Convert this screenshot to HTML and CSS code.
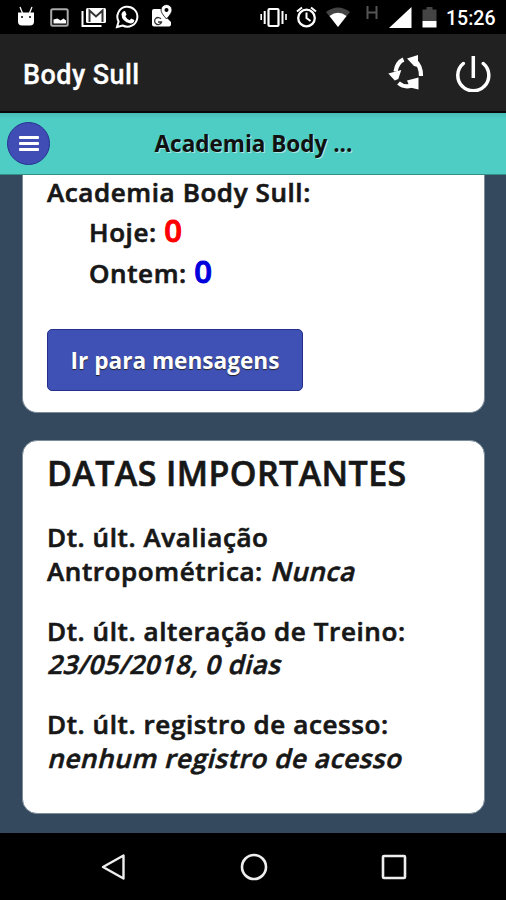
FILE: index.html
```html
<!DOCTYPE html>
<html lang="pt-BR">
<head>
<meta charset="utf-8">
<title>Body Sull</title>
<link rel="stylesheet" href="styles.css">
</head>
<body>
<div class="phone">
  <div class="status">
    <svg class="notifications" width="180" height="34" viewBox="0 0 180 34" fill="none" stroke="#fff">
      <path d="M18 12.500h16v9q0 4-4 4h-8q-4 0-4-4z" fill="#fff" stroke="none"/>
      <path d="M20 7l2.500 6M32 7l-2.500 6" stroke-width="1.300"/>
      <circle cx="22" cy="17" r="1" fill="#000" stroke="none"/><circle cx="30" cy="17" r="1" fill="#000" stroke="none"/>
      <rect x="51.200" y="9.200" width="16.500" height="16.500" rx="1.500" stroke="#aaa" stroke-width="2"/>
      <path d="M53.500 23.500v-4l4-1 3 2 3-2 2.500 2v3z" fill="#fff" stroke="none"/>
      <path d="M82.500 11v15h19" stroke-width="2"/>
      <rect x="86" y="8" width="20" height="15" rx="1.500" fill="#fff" stroke="none"/>
      <path d="M89.500 22V10.500l6.500 6 6.500-6V22" stroke="#333" stroke-width="2"/>
      <path d="M117 27l1.600-5.500a10 10 0 1 1 4 4z" stroke-width="2"/>
      <path d="M123 11.500l2-.5 1.600 3.600-1.300 1.600q1.600 3 4.400 4l1.600-1.600 3 1.500q0 3.400-3.800 3.400-9-2-9-9.200 0-1.400 1.500-2.800z" fill="#fff" stroke="none"/>
      <path d="M154 9h10q-1 4 2 8l5 5v2.500q0 2-2 2h-15q-2 0-2-2V11q0-2 2-2z" fill="#fff" stroke="none"/>
      <path d="M161 19a3.500 3.500 0 1 0 .5 3h-3.500" stroke="#333" stroke-width="1.300"/>
      <path d="M166.500 19q-5.500-6-5.500-9a5.500 5.500 0 0 1 11 0q0 3-5.500 9z" fill="#fff" stroke="#000" stroke-width=".8"/>
      <circle cx="166.500" cy="10" r="2" fill="#000" stroke="none"/>
    </svg>
    <svg class="system" width="190" height="34" viewBox="250 0 190 34" fill="none" stroke="#fff">
      <rect x="268.500" y="9" width="10" height="17" rx="1" stroke-width="2.200"/>
      <path d="M264.700 11v13M282.500 11v13" stroke-width="2"/><path d="M261.200 14v6M286 14v6" stroke-width="1.600"/>
      <circle cx="306.500" cy="18" r="8.300" stroke-width="2.300"/>
      <path d="M306.500 12.500V18l4 3M297 11.500l5-4M311 7.500l5 4" stroke-width="2"/>
      <path d="M326 12q12-9 24 0l-12 15z" fill="#444" stroke="none"/>
      <path d="M329.500 16q8.500-6.500 17 0L338 27z" fill="#fff" stroke="none"/>
      <path d="M367.500 6v13M376.500 6v13M367.500 12.500h9" stroke="#555" stroke-width="2"/>
      <path d="M389 28l22.500-21v21z" fill="#fff" stroke="none"/>
      <path d="M422.500 9.500h4V7h6v2.500h4V21h-14z" fill="#444" stroke="none"/>
      <path d="M422.500 21h14v6.500h-14z" fill="#fff" stroke="none"/>
    </svg>
    <span class="clock">15:26</span>
  </div>

  <header class="appbar">
    <h1 class="app-title">Body Sull</h1>
    <svg class="refresh" width="36" height="36" viewBox="388 56 36 36" fill="none" stroke="#fff">
      <path d="M403.500 60.500q-6.500 3-8 12M414.500 61.500q6.500 5 6.500 15.500M398.500 84q6 5 13 2.500" stroke-width="4.200"/>
      <path d="M388.300 74.500l13-3.500-3 9-3.500 1.500zM407 59.500l11-3.500v12l-4-1zM407 81.500l11.500-3v12l-8.500-2z" fill="#fff" stroke="none"/>
    </svg>
    <svg class="power" width="36" height="38" viewBox="455 54 36 38" fill="none" stroke="#fff" stroke-width="3.500">
      <path d="M463.300 63.500a15.500 15.500 0 1 0 20 0" stroke-linecap="round"/>
      <path d="M473.300 56v22"/>
    </svg>
  </header>

  <div class="pagebar">
    <button class="menu" aria-label="Menu"><span></span><span></span><span></span></button>
    <h2 class="page-title">Academia Body ...</h2>
  </div>

  <main class="content">
    <section class="card messages">
      <p class="line gym">Academia Body Sull:</p>
      <p class="line count">Hoje: <b class="today">0</b></p>
      <p class="line count">Ontem: <b class="yesterday">0</b></p>
      <button class="go">Ir para mensagens</button>
    </section>
    <section class="card dates">
      <h3 class="heading">DATAS IMPORTANTES</h3>
      <p class="entry">Dt. últ. Avaliação<br>Antropométrica: <em>Nunca</em></p>
      <p class="entry">Dt. últ. alteração de Treino:<br><em class="date">23/05/2018, 0 dias</em></p>
      <p class="entry">Dt. últ. registro de acesso:<br><em>nenhum registro de acesso</em></p>
    </section>
  </main>

  <nav class="navbar">
    <svg width="28" height="30" viewBox="0 0 28 30" fill="none" stroke="#eee" stroke-width="2.400" stroke-linejoin="round"><path d="M23.500 3.500v23L3 15z"/></svg>
    <svg width="28" height="30" viewBox="0 0 28 30" fill="none" stroke="#eee" stroke-width="2.600"><circle cx="14" cy="15" r="12"/></svg>
    <svg width="28" height="30" viewBox="0 0 28 30" fill="none" stroke="#eee" stroke-width="2.600"><rect x="3" y="4" width="22" height="22" rx="1"/></svg>
  </nav>
</div>
</body>
</html>
```
FILE: styles.css
```css
* { box-sizing: border-box; margin: 0; padding: 0; }
body { background: #000; }
.phone {
  width: 506px; height: 900px; overflow: hidden;
  display: flex; flex-direction: column;
  font-family: "Open Sans", "Noto Sans", sans-serif;
  font-weight: 600; color: #171717; background: #34495e;
}
.status { height: 34px; flex: none; display: flex; background: #000; color: #fff; }
.status svg, .appbar svg { flex: none; display: block; }
.system { margin-left: 70px; }
.clock {
  margin-left: 6px; line-height: 37px; white-space: nowrap;
  font-family: Roboto, sans-serif; font-size: 19.500px; font-weight: 500;
}
.appbar {
  height: 79px; flex: none; display: flex; align-items: center;
  padding: 0 15px 0 23px; background: #212121; border-bottom: 2px solid #080808;
}
.app-title {
  flex: 1; color: #fff; font-family: Roboto, sans-serif;
  font-size: 27px; font-weight: 500; line-height: 36px; padding-top: 5px;
  letter-spacing: .45px; -webkit-text-stroke: .3px;
}
.refresh { margin-right: 31px; }
.pagebar {
  height: 62px; flex: none; display: flex; align-items: center;
  padding-left: 7px; background: linear-gradient(#48bcb3, #4ecdc4 6px);
  border-bottom: 1px solid #348f88;
}
.menu {
  width: 43px; height: 43px; border: 1px solid #263290; border-radius: 50%;
  background: #3f4db5; display: flex; flex-direction: column; flex: none;
  align-items: center; justify-content: center; gap: 3px;
}
.menu span { width: 20px; height: 3px; background: #fff; border-radius: 1px; }
.page-title {
  flex: 1; padding-right: 49px; text-align: center; font-size: 22.500px; font-weight: 700;
  color: #111; text-shadow: 1px 1px 0 rgba(255, 255, 255, .55);
}
.content { flex: 1; padding: 0 21px 0 22px; min-height: 0; }
.card { background: #fff; border: 1px solid #7c8c99; padding: 0 24px; }
.messages { height: 238px; border-top: 0; border-radius: 0 0 15px 15px; }
.line, .entry {
  font-size: 26px; letter-spacing: .6px; white-space: nowrap;
  -webkit-text-stroke: .65px;
}
.line { line-height: 41px; }
.gym { line-height: 34px; margin-bottom: 3px; }
.count { padding-left: 42px; }
.count b { font-size: 31px; line-height: 36px; font-weight: 600; -webkit-text-stroke: 1px; }
.today { color: #f00; }
.yesterday { color: #00d; }
.go {
  display: block; width: 256px; height: 62px; margin-top: 35px;
  border: 1px solid #252f87; border-radius: 5px; background: #3f51b5;
  color: #fff; font: 700 22.600px "Open Sans", sans-serif;
  text-shadow: 0 1px 1px #222; white-space: nowrap;
}
.dates { height: 374px; margin-top: 27px; border-radius: 15px; padding-top: 9px; }
.heading {
  font-size: 34px; font-weight: 600; line-height: 46px; white-space: nowrap;
  letter-spacing: .4px; -webkit-text-stroke: .6px;
}
.entry { line-height: 33.800px; margin-bottom: 26px; }
.heading + .entry { margin-top: 25px; }
.entry em {
  display: inline-block; font-style: normal;
  transform: skewX(-14deg); transform-origin: 0 76%;
}
.entry .date { letter-spacing: .4px; }
.navbar {
  height: 67px; flex: none; display: flex; justify-content: space-between;
  padding: 19px 98px 0 100px; background: #000;
}
```
